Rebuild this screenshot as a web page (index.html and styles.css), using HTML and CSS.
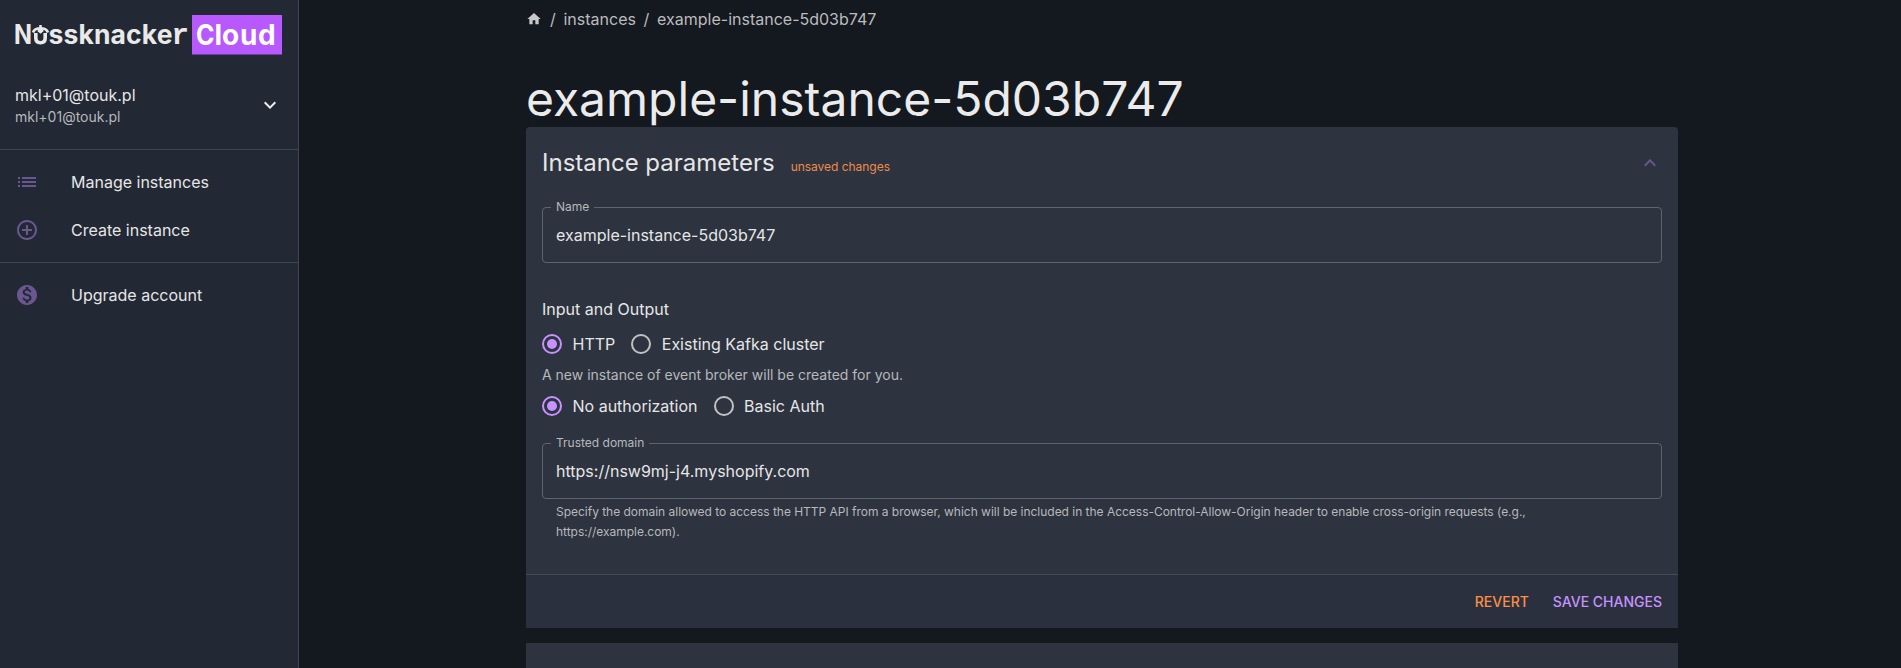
FILE: index.html
```html
<!DOCTYPE html>
<html lang="en">
<head>
<meta charset="utf-8">
<title>example-instance-5d03b747 - Nussknacker Cloud</title>
<link rel="stylesheet" href="styles.css">
</head>
<body>
<div class="app">
  <aside class="sidebar">
    <div class="brand">
      <svg class="logo" width="270" height="42" viewBox="0 0 270 42" role="img" aria-label="Nussknacker Cloud">
        <g class="logo-name">
          <text x="-1" y="29.300" textLength="18" lengthAdjust="spacingAndGlyphs">N</text>
          <text x="33.500" y="29.300" textLength="124" lengthAdjust="spacing">ssknacke</text>
          <text class="mono" x="156.500" y="29.300">r</text>
          <path d="M20.800 18v5q0 4.700 4.700 4.700t4.700-4.700v-5"/>
          <path class="cap" d="M18 17.500q1.500-4.200 7.500-4.200t7.500 4.200M25.500 10v8M23 15l2.500 2 2.500-2"/>
        </g>
        <rect class="logo-tile" x="177" width="90" height="39.500"/>
        <text class="cloud" x="181" y="29.500" textLength="18.500" lengthAdjust="spacingAndGlyphs">C</text>
        <text class="cloud" x="199.500 207 225 243" y="29.500">loud</text>
      </svg>
    </div>
    <div class="account">
      <div class="account-text">
        <div class="account-name">mkl+01@touk.pl</div>
        <div class="account-mail">mkl+01@touk.pl</div>
      </div>
      <svg class="icon light" viewBox="0 0 24 24"><path d="M7.410 8.590 12 13.170l4.590-4.580L18 10l-6 6-6-6z"/></svg>
    </div>
    <nav class="menu">
      <a class="menu-item"><svg class="icon" viewBox="0 0 24 24"><path d="M3 13h2v-2H3zm0 4h2v-2H3zm0-8h2V7H3zm4 4h14v-2H7zm0 4h14v-2H7zM7 7v2h14V7z"/></svg>Manage instances</a>
      <a class="menu-item"><svg class="icon" viewBox="0 0 24 24"><path d="M13 7h-2v4H7v2h4v4h2v-4h4v-2h-4zm-1-5C6.480 2 2 6.480 2 12s4.480 10 10 10 10-4.480 10-10S17.520 2 12 2m0 18c-4.410 0-8-3.590-8-8s3.590-8 8-8 8 3.590 8 8-3.590 8-8 8"/></svg>Create instance</a>
    </nav>
    <nav class="menu">
      <a class="menu-item"><svg class="icon" viewBox="0 0 24 24"><path d="M12 2C6.480 2 2 6.480 2 12s4.480 10 10 10 10-4.480 10-10S17.520 2 12 2m1.410 16.090V20h-2.670v-1.930c-1.710-.36-3.160-1.460-3.270-3.400h1.960c.1 1.050.82 1.870 2.650 1.870 1.960 0 2.400-.98 2.400-1.590 0-.83-.44-1.610-2.670-2.140-2.480-.6-4.180-1.620-4.180-3.670 0-1.720 1.390-2.840 3.110-3.210V4h2.670v1.950c1.860.45 2.790 1.860 2.850 3.390H14.300c-.05-1.110-.64-1.870-2.220-1.870-1.500 0-2.400.68-2.400 1.640 0 .84.65 1.390 2.670 1.910s4.180 1.390 4.180 3.910c-.01 1.830-1.380 2.830-3.120 3.160"/></svg>Upgrade account</a>
    </nav>
  </aside>
  <main class="content">
    <div class="page">
      <div class="crumbs">
        <svg class="home" viewBox="0 0 24 24"><path d="M10 20v-6h4v6h5v-8h3L12 3 2 12h3v8z"/></svg>
        <span>/</span><span>instances</span><span>/</span><span>example-instance-5d03b747</span>
      </div>
      <h1 class="title">example-instance-5d03b747</h1>
      <section class="panel">
        <div class="panel-head">
          <h2>Instance parameters</h2>
          <span class="unsaved">unsaved changes</span>
          <svg class="icon collapse" viewBox="0 0 24 24"><path d="M7.410 15.410 12 10.830l4.590 4.580L18 14l-6-6-6 6z"/></svg>
        </div>
        <div class="panel-body">
          <fieldset class="field"><legend>Name</legend><div class="value">example-instance-5d03b747</div></fieldset>
          <div class="group-label">Input and Output</div>
          <div class="radios">
            <label><i class="radio on"></i>HTTP</label>
            <label><i class="radio"></i>Existing Kafka cluster</label>
          </div>
          <p class="note">A new instance of event broker will be created for you.</p>
          <div class="radios">
            <label><i class="radio on"></i>No authorization</label>
            <label><i class="radio"></i>Basic Auth</label>
          </div>
          <fieldset class="field domain"><legend>Trusted domain</legend><div class="value">https://nsw9mj-j4.myshopify.com</div></fieldset>
          <p class="helper">Specify the domain allowed to access the HTTP API from a browser, which will be included in the Access-Control-Allow-Origin header to enable cross-origin requests (e.g.,<br>https://example.com).</p>
        </div>
        <div class="panel-foot"><button class="revert">REVERT</button><button class="save">SAVE CHANGES</button></div>
      </section>
      <section class="panel next"></section>
    </div>
  </main>
</div>
</body>
</html>
```
FILE: styles.css
```css
* { box-sizing: border-box; }
body {
  margin: 0;
  background: #14181f;
  color: #e6e6e6;
  font: 400 16px/24px Inter, "Liberation Sans", sans-serif;
}
h1, h2, p { margin: 0; font-weight: 400; }
.app { display: flex; height: 668px; overflow: hidden; }
.sidebar { width: 299px; flex: none; background: #222834; border-right: 1px solid #40454f; }
.brand { padding: 15px 0 0 15px; height: 75px; }
.logo { display: block; }
.logo text { font-family: Inter, sans-serif; font-weight: 700; font-size: 26.5px; }
.logo-name text { fill: #e9e9e9; }
.logo .mono { font-family: "Liberation Mono", monospace; font-size: 29px; }
.logo path { fill: none; stroke: #e9e9e9; stroke-width: 3.6; }
.logo .cap { stroke-width: 2.6; }
.logo-tile { fill: #b858ff; }
.logo .cloud { fill: #fff; font-size: 28px; }
.account { display: flex; align-items: center; justify-content: space-between; height: 75px; padding: 0 16px 15px 15px; border-bottom: 1px solid #40454f; }
.account-name { line-height: 24px; }
.account-mail { font-size: 14px; line-height: 20px; color: #b7b9bc; }
.icon { width: 24px; height: 24px; fill: #6a5790; flex: none; }
.light { fill: #ededed; }
.menu { padding: 8px 0; border-bottom: 1px solid #40454f; }
.menu:last-child { border: 0; }
.menu-item { display: flex; align-items: center; height: 48px; padding-left: 15px; gap: 32px; }
.content { flex: 1; padding-left: 227px; }
.page { width: 1152px; display: flex; flex-direction: column; }
.crumbs { display: flex; align-items: center; height: 38px; gap: 8px; color: #bbbcbe; }
.crumbs span:nth-of-type(n+2) { margin-left: -0.3px; }
.home { width: 16px; height: 16px; fill: #c8c8c8; }
.title { font-size: 48px; line-height: 56px; height: 89px; padding-top: 33px; color: #ebebeb; }
.panel { background: #2d333f; border-radius: 4px 4px 0 0; }
.panel-head { display: flex; align-items: center; height: 72px; padding: 0 16px; }
.panel-head h2 { font-size: 24px; line-height: 32px; }
.unsaved { margin: 8px 0 0 16px; font-size: 12px; line-height: 20px; letter-spacing: -0.03px; color: #ee8b4c; }
.collapse { margin-left: auto; }
.panel-body { padding: 0 16px; height: 375px; display: flex; flex-direction: column; }
.field { margin: 0; min-width: 0; border: 1px solid #5f646d; border-radius: 4px; padding: 0 13px; height: 64px; }
.field legend { font-size: 12px; line-height: 16px; color: #b7b9bc; padding: 0 5px; margin-left: -5px; }
.value { padding-top: 8px; }
.group-label { margin-top: 34px; }
.radios { display: flex; gap: 16px; height: 42px; align-items: center; }
.group-label + .radios { margin-top: 2px; }
.radios label { display: flex; align-items: center; gap: 10.5px; }
.radio { width: 20px; height: 20px; border: 2px solid #c1c2c4; border-radius: 50%; display: grid; place-items: center; }
.radio.on { border-color: #c792ff; }
.radio.on::after { content: ""; width: 10px; height: 10px; border-radius: 50%; background: #c792ff; }
.note { font-size: 14px; line-height: 20px; color: #b7b9bc; }
.domain { margin-top: 8px; }
.helper { margin: 3px 14px 0; font-size: 12px; line-height: 20px; letter-spacing: -0.02px; color: #b7b9bc; }
.panel-foot { display: flex; justify-content: flex-end; align-items: center; gap: 24px; height: 54px; padding: 0 16px; border-top: 1px solid #454a54; background: #2a303d; }
button { border: 0; padding: 0; background: none; font: 500 14px/24px Inter, "Liberation Sans", sans-serif; }
.revert { color: #ff8f45; }
.save { color: #c792ff; }
.next { margin-top: 15px; height: 60px; border-radius: 0; }
```
